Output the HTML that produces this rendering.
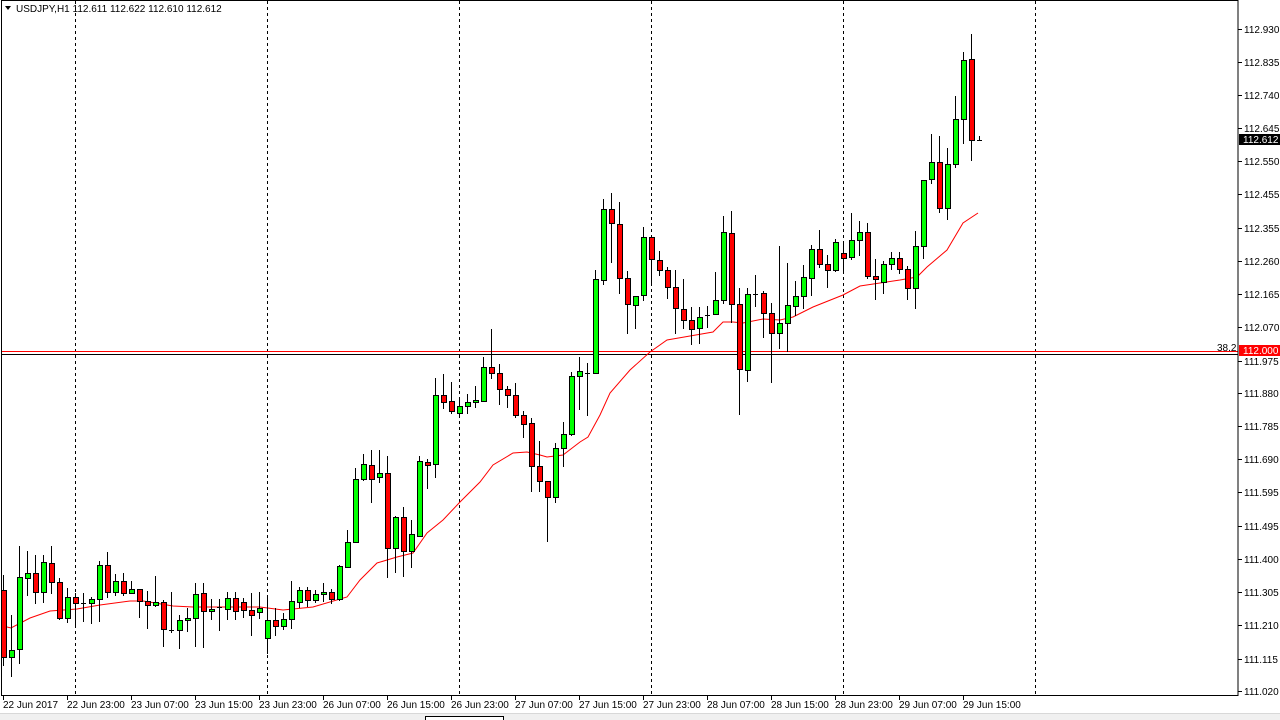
<!DOCTYPE html>
<html><head><meta charset="utf-8"><style>
html,body{margin:0;padding:0;background:#fff;width:1280px;height:720px;overflow:hidden}
svg{display:block}
text{font-family:"Liberation Sans","DejaVu Sans",sans-serif;font-size:10px}
</style></head><body>
<svg id="s" width="1280" height="720" xmlns="http://www.w3.org/2000/svg">
<rect x="0" y="0" width="1280" height="720" fill="#fff"/>
<g id="grid" stroke="#000" stroke-width="1" stroke-dasharray="3,3" shape-rendering="crispEdges"></g>
<line x1="2" y1="351.5" x2="1238" y2="351.5" stroke="#ff0000" stroke-width="1" shape-rendering="crispEdges"/>
<line x1="2" y1="354.5" x2="1238" y2="354.5" stroke="#000" stroke-width="1" shape-rendering="crispEdges"/>
<text x="1217" y="351" fill="#000">38.2</text>
<polyline id="ma" fill="none" stroke="#ff0000" stroke-width="1"/>
<g id="c" shape-rendering="crispEdges"></g>
<g id="ax" shape-rendering="crispEdges"></g>
<rect x="1.5" y="0.5" width="1236.5" height="695" fill="none" stroke="#000"/>
<polygon points="5,6 11,6 8,10" fill="#000"/>
<text x="16" y="12" fill="#000">USDJPY,H1  112.611 112.622 112.610 112.612</text>
<rect x="1239" y="134" width="41" height="11" fill="#000"/>
<text x="1243" y="143" fill="#fff">112.612</text>
<rect x="1239" y="345" width="41" height="11" fill="#ff0000"/>
<text x="1243" y="354" fill="#fff">112.000</text>
<rect x="0" y="713" width="1280" height="7" fill="#f0f0f0"/>
<line x1="0" y1="713.5" x2="1280" y2="713.5" stroke="#d8d8d8"/>
<rect x="425.5" y="716.5" width="78" height="5" fill="#fff" stroke="#000"/>
</svg>
<script>
var C=[
[590,657,575,665],[657,650,615,676],[649,577,546,663],[578,573,551,595],[573,592,555,603],[592,562,555,602],[563,582,546,593],[582,618,578,619],[618,597,588,622],[597,603,593,627],
[603,603,593,621],[603,599,597,623],[599,565,561,621],[565,592,552,597],[592,581,574,595],[581,593,573,595],[593,589,581,593],[589,601,589,617],[601,605,591,628],[605,602,576,606],
[602,629,600,646],[630,630,592,632],[630,620,615,648],[620,618,608,631],[618,594,583,646],[593,611,583,647],[611,609,599,619],[607,607,599,630],[609,598,592,619],[598,611,592,619],
[602,610,598,617],[610,615,593,635],[612,608,592,618],[638,620,596,653],[620,626,608,635],[626,619,613,629],[619,601,581,628],[602,590,587,607],[590,600,587,606],[600,594,590,602],
[594,592,583,601],[592,599,589,603],[599,566,565,600],[567,542,530,567],[542,479,468,542],[479,464,454,480],[465,479,450,502],[477,473,450,482],[473,548,456,577],[548,517,516,572],
[517,551,507,576],[551,534,520,567],[536,461,456,536],[462,465,459,488],[464,395,378,477],[395,402,374,408],[401,411,382,413],[413,406,397,417],[406,402,394,413],[402,400,386,407],
[401,367,357,401],[367,373,329,378],[373,389,364,404],[389,395,386,407],[395,415,383,417],[415,424,411,437],[423,466,418,491],[466,481,441,491],[481,497,481,541],[497,448,443,502],
[448,434,422,466],[434,376,372,435],[376,371,357,409],[373,373,363,415],[373,279,270,373],[280,209,199,284],[209,223,193,262],[224,278,202,293],[278,304,271,333],[305,296,296,328],
[295,237,227,300],[237,259,235,285],[260,270,251,275],[270,287,267,298],[287,308,270,333],[309,320,279,328],[320,329,307,344],[328,317,307,343],[315,315,306,327],[314,300,272,314],
[300,232,216,303],[233,304,211,322],[304,369,288,414],[370,294,288,381],[294,294,275,306],[293,313,291,337],[313,333,303,382],[333,323,246,348],[323,305,263,351],[306,296,281,315],
[296,277,265,308],[278,249,245,295],[249,264,230,267],[264,270,255,287],[270,242,239,271],[253,258,241,273],[257,240,213,259],[240,232,221,255],[232,276,223,278],[276,279,259,299],
[282,264,261,293],[264,258,252,269],[258,269,252,273],[269,288,266,299],[288,246,231,308],[246,180,180,258],[179,162,134,183],[162,208,136,212],[208,164,148,219],[164,119,96,167],
[119,60,52,143],[59,140,34,160],[140,140,136,140]
];
var ns="http://www.w3.org/2000/svg";
function el(t,a,p){var e=document.createElementNS(ns,t);for(var k in a)e.setAttribute(k,a[k]);p.appendChild(e);return e;}
var g=document.getElementById('c');
C.forEach(function(c,i){
 var x=3+8*i,o=c[0],cl=c[1],h=c[2],l=c[3];
 el('line',{x1:x+0.5,y1:h,x2:x+0.5,y2:l+1,stroke:'#000'},g);
 var t=Math.min(o,cl),b=Math.max(o,cl);
 if(b-t<1){el('line',{x1:x-2,y1:t+0.5,x2:x+3,y2:t+0.5,stroke:'#000'},g);}
 else el('rect',{x:x-2+0.5,y:t+0.5,width:5,height:b-t,fill:(cl<o?'#00ff00':'#ff0000'),stroke:'#000'},g);
});
var ma=[[3,626],[11,628],[30,618],[50,611],[77,609],[100,605],[130,601],[143,601],[173,606],[193,607],[233,607],[260,607],[283,610],[313,607],[347,597],[360,580],[377,563],[397,557],[413,553],[427,533],[443,520],[460,502],[480,482],[493,465],[513,453],[527,452],[540,455],[547,457],[563,455],[580,442],[588,437],[600,415],[610,393],[630,370],[650,352],[667,340],[690,336],[713,332],[723,322],[733,322],[743,323],[763,319],[780,320],[793,317],[813,307],[843,295],[860,286],[900,280],[917,277],[927,267],[947,250],[963,223],[978,213]];
document.getElementById('ma').setAttribute('points',ma.map(function(p){return p.join(',')}).join(' '));
var gr=document.getElementById('grid');
[75,267,459,651,843,1035].forEach(function(x){el('line',{x1:x+0.5,y1:1,x2:x+0.5,y2:695},gr);});
var ax=document.getElementById('ax');
var pr=[["112.930",29],["112.835",62],["112.740",95],["112.645",128],["112.550",161],["112.455",194],["112.355",228],["112.260",261],["112.165",294],["112.070",327],["111.975",361],["111.880",393],["111.785",426],["111.690",459],["111.595",492],["111.495",526],["111.400",559],["111.305",592],["111.210",625],["111.115",659],["111.020",691]];
pr.forEach(function(p){el('line',{x1:1238,y1:p[1]+0.5,x2:1242,y2:p[1]+0.5,stroke:'#000'},ax);var t=el('text',{x:1244,y:p[1]+4,fill:'#000'},ax);t.textContent=p[0];});
var tl=["22 Jun 2017","22 Jun 23:00","23 Jun 07:00","23 Jun 15:00","23 Jun 23:00","26 Jun 07:00","26 Jun 15:00","26 Jun 23:00","27 Jun 07:00","27 Jun 15:00","27 Jun 23:00","28 Jun 07:00","28 Jun 15:00","28 Jun 23:00","29 Jun 07:00","29 Jun 15:00"];
tl.forEach(function(s,i){var x=3+64*i;el('line',{x1:x+0.5,y1:695,x2:x+0.5,y2:700,stroke:'#000'},ax);var t=el('text',{x:x,y:708,fill:'#000'},ax);t.textContent=s;});
</script>
</body></html>
